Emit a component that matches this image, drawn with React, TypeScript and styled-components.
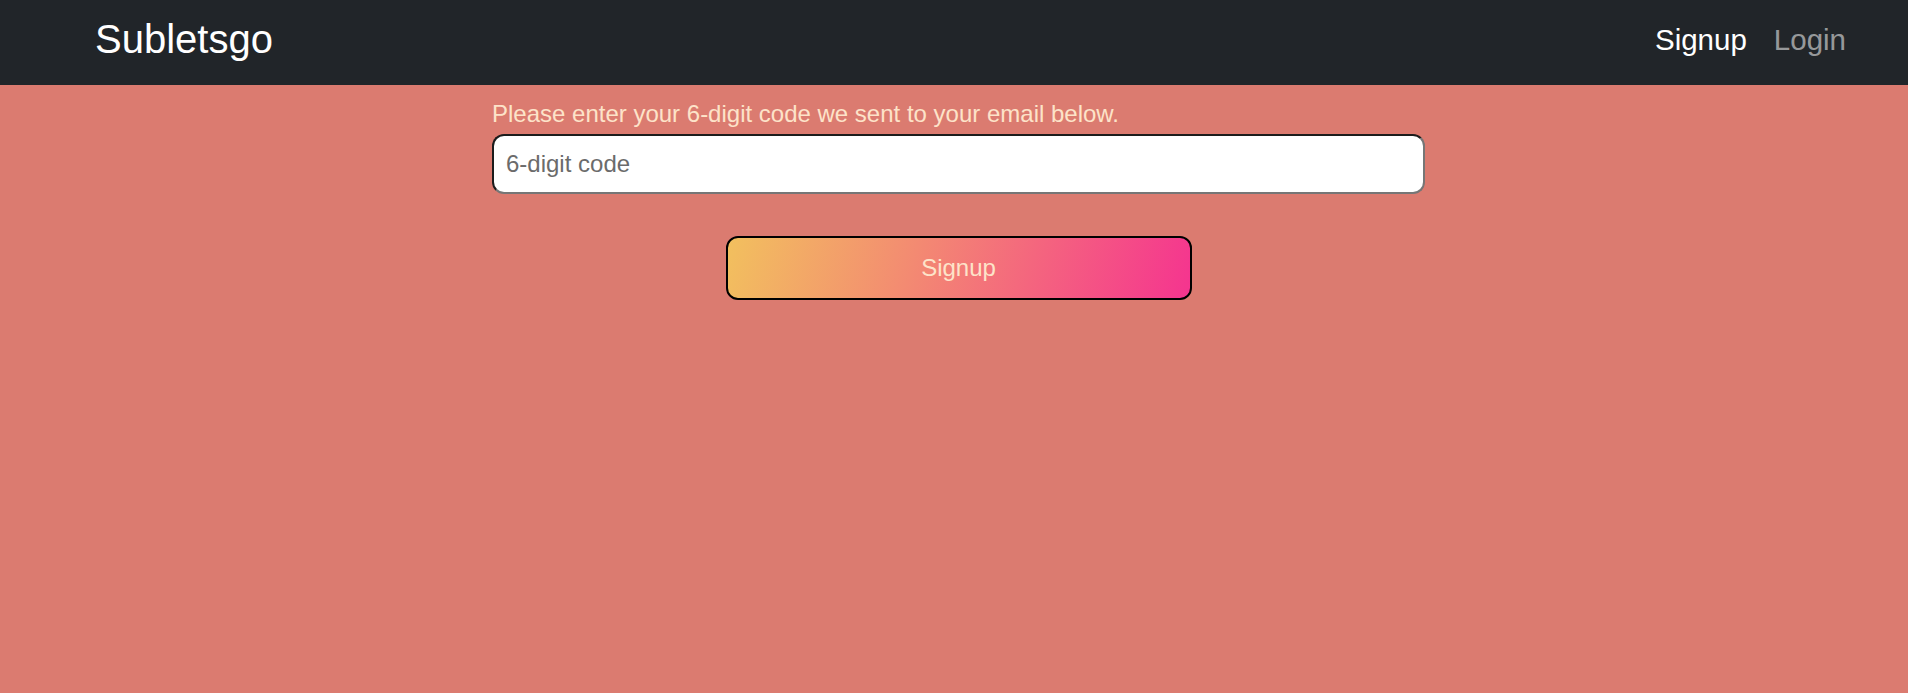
import React from "react";
import styled, { createGlobalStyle } from "styled-components";

const Global = createGlobalStyle`
  html, body { margin: 0; padding: 0; }
  body {
    background: #db7b70;
    font-family: "Liberation Sans", Arial, sans-serif;
    min-height: 693px;
  }
`;

const NavBar = styled.nav`
  height: 85px;
  background: #212529;
  display: flex;
  align-items: center;
  justify-content: space-between;
  padding: 0 62px 8px 95px;
  box-sizing: border-box;
`;

const Brand = styled.a`
  color: #ffffff;
  font-size: 40px;
  line-height: 1;
  text-decoration: none;
`;

const Links = styled.div`
  display: flex;
  align-items: center;
  gap: 27px;
  margin-top: 2px;
`;

const NavLink = styled.a<{ $active?: boolean }>`
  color: ${(p) => (p.$active ? "#ffffff" : "rgba(255,255,255,0.55)")};
  font-size: 29.5px;
  line-height: 1;
  text-decoration: none;
`;

const Main = styled.main`
  display: flex;
  flex-direction: column;
`;

const Form = styled.form`
  width: 933px;
  margin: 15px 0 0 492px;
  display: flex;
  flex-direction: column;
  align-items: center;
`;

const Label = styled.label`
  align-self: stretch;
  color: #fde3c9;
  font-size: 24px;
  line-height: 1.15;
  margin-bottom: 6px;
`;

const Input = styled.input`
  align-self: stretch;
  box-sizing: border-box;
  height: 60px;
  padding: 0 12px;
  border-width: 2px;
  border-style: solid;
  border-color: #1c1c1c #767676 #767676 #1c1c1c;
  border-radius: 12px;
  background: #ffffff;
  font-family: "Liberation Sans", Arial, sans-serif;
  font-size: 24px;
  color: #212529;
  outline: none;
  &::placeholder {
    color: #6b6b6b;
  }
`;

const Button = styled.button`
  margin-top: 42px;
  width: 466px;
  height: 64px;
  border: 2px solid #000000;
  border-radius: 12px;
  background: linear-gradient(105deg, #f2c05e 0%, #f38a72 40%, #f4667e 65%, #f5348f 100%);
  color: #fde3c9;
  font-family: "Liberation Sans", Arial, sans-serif;
  font-size: 24px;
  cursor: pointer;
`;

export default function App() {
  return (
    <>
      <Global />
      <NavBar>
        <Brand href="#">Subletsgo</Brand>
        <Links>
          <NavLink href="#" $active>
            Signup
          </NavLink>
          <NavLink href="#">Login</NavLink>
        </Links>
      </NavBar>
      <Main>
        <Form onSubmit={(e) => e.preventDefault()}>
          <Label htmlFor="code">Please enter your 6-digit code we sent to your email below.</Label>
          <Input id="code" placeholder="6-digit code" />
          <Button type="submit">Signup</Button>
        </Form>
      </Main>
    </>
  );
}
